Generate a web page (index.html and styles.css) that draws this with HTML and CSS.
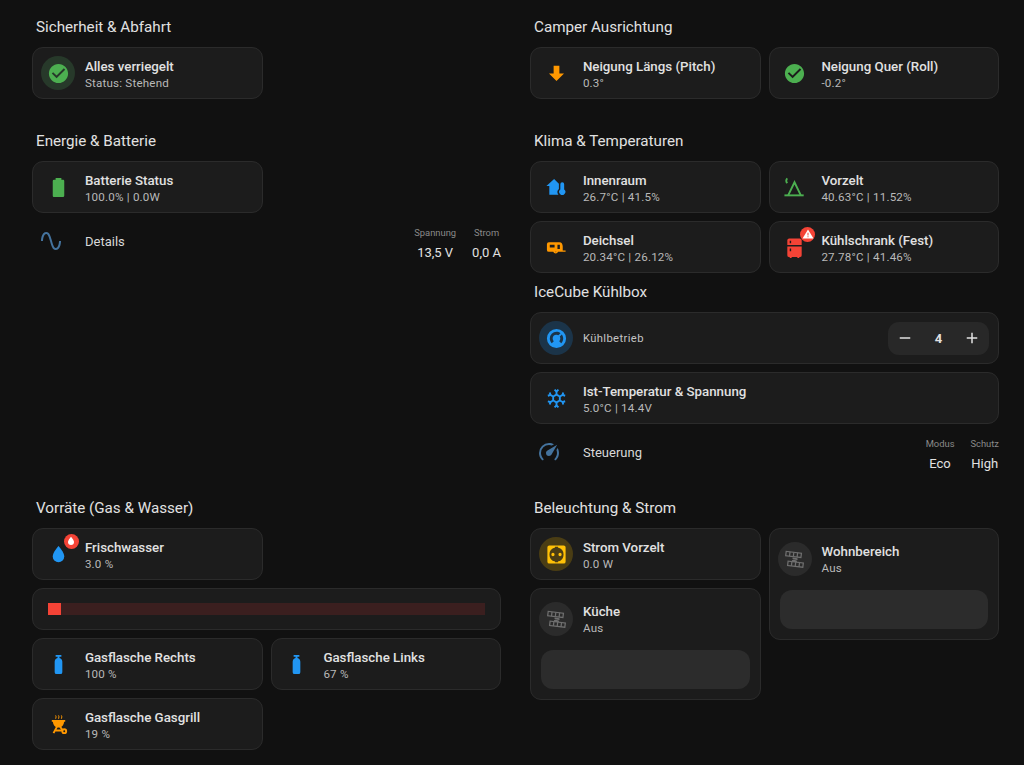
FILE: index.html
```html
<!DOCTYPE html>
<html lang="de">
<head>
<meta charset="utf-8">
<title>Camper Dashboard</title>
<link rel="stylesheet" href="styles.css">
</head>
<body>
<main class="page">
  <section class="sec">
    <h2>Sicherheit &amp; Abfahrt</h2>
    <div class="cards">
      <div class="tile"><span class="ico disc green"><svg viewBox="0 0 24 24"><path d="M12 2C6.5 2 2 6.5 2 12S6.5 22 12 22 22 17.5 22 12 17.5 2 12 2M10 17L5 12L6.41 10.59L10 14.17L17.59 6.58L19 8L10 17Z"/></svg></span><div class="txt"><b>Alles verriegelt</b><small>Status: Stehend</small></div></div>
    </div>
  </section>
  <section class="sec">
    <h2>Camper Ausrichtung</h2>
    <div class="cards">
      <div class="tile"><span class="ico orange"><svg viewBox="0 0 24 24"><path d="M9,4H15V12H19.84L12,19.84L4.16,12H9V4Z"/></svg></span><div class="txt"><b>Neigung Längs (Pitch)</b><small>0.3°</small></div></div>
      <div class="tile"><span class="ico green"><svg viewBox="0 0 24 24"><path d="M12 2C6.5 2 2 6.5 2 12S6.5 22 12 22 22 17.5 22 12 17.5 2 12 2M10 17L5 12L6.41 10.59L10 14.17L17.59 6.58L19 8L10 17Z"/></svg></span><div class="txt"><b>Neigung Quer (Roll)</b><small>-0.2°</small></div></div>
    </div>
  </section>

  <section class="sec">
    <h2>Energie &amp; Batterie</h2>
    <div class="cards">
      <div class="tile"><span class="ico green"><svg viewBox="0 0 24 24"><path d="M16.67,4H15V2H9V4H7.33A1.33,1.33 0 0,0 6,5.33V20.67C6,21.4 6.6,22 7.33,22H16.67A1.33,1.33 0 0,0 18,20.67V5.33C18,4.6 17.4,4 16.67,4Z"/></svg></span><div class="txt"><b>Batterie Status</b><small>100.0% | 0.0W</small></div></div>
      <div class="row wide">
        <span class="row-ico"><svg viewBox="0 0 24 24"><path d="M16.5,21C13.5,21 12.31,16.76 11.05,12.28C10.14,9.04 9,5 7.5,5C4.11,5 4,11.93 4,12H2C2,11.63 2.06,3 7.5,3C10.5,3 11.71,7.25 12.97,11.74C13.83,14.8 15,19 16.5,19C19.94,19 20.03,12.07 20.03,12H22.03C22.03,12.37 21.97,21 16.5,21Z"/></svg></span>
        <span class="row-name">Details</span>
        <div class="attr"><small>Spannung</small><span>13,5 V</span></div>
        <div class="attr"><small>Strom</small><span>0,0 A</span></div>
      </div>
    </div>
  </section>
  <section class="sec">
    <h2>Klima &amp; Temperaturen</h2>
    <div class="cards">
      <div class="tile"><span class="ico blue"><svg viewBox="0 0 24 24"><path d="M9.5 3L1.500 10.500H4.500V19.500H14A4 4 0 0 1 14.500 13.500V8L9.500 3Z"/><path d="M18 6.500A2 2 0 0 0 16 8.500V14A3.200 3.200 0 1 0 20 14V8.500A2 2 0 0 0 18 6.500Z"/></svg></span><div class="txt"><b>Innenraum</b><small>26.7°C | 41.5%</small></div></div>
      <div class="tile"><span class="ico green"><svg viewBox="0 0 24 24"><path class="st" d="M5.500 20L12 6.500L18.500 20"/><path class="st" d="M1.500 20.200H21.600"/><path class="st" d="M4.500 2.500C3 4 3 6 4.500 7.500"/></svg></span><div class="txt"><b>Vorzelt</b><small>40.63°C | 11.52%</small></div></div>
      <div class="tile"><span class="ico orange"><svg viewBox="0 0 24 24"><path fill-rule="evenodd" d="M4 6.500H15C17.500 6.500 18.500 8.500 18.500 11V15H21.500V16.500H13.600A2.600 2.600 0 0 1 8.600 16.500H4A2 2 0 0 1 2 14.500V8.500A2 2 0 0 1 4 6.500ZM5 9V12H10V9ZM13 9V13.500H15.500V9ZM10.500 16.500A.8 .8 0 0 0 12 16.500Z"/></svg></span><div class="txt"><b>Deichsel</b><small>20.34°C | 26.12%</small></div></div>
      <div class="tile"><span class="ico red"><svg viewBox="0 0 24 24"><path fill-rule="evenodd" d="M6.500 2.500H17.500A2 2 0 0 1 19.500 4.500V9.500H4.500V4.500A2 2 0 0 1 6.500 2.500ZM7 5V7.500H8.500V5ZM4.500 11H19.500V20A2 2 0 0 1 17.500 22H17V23H15V22H9V23H7V22H6.500A2 2 0 0 1 4.500 20ZM7 13V16H8.500V13Z"/></svg><span class="badge"><svg viewBox="0 0 24 24"><path class="w" d="M12 3L23 21H1ZM11 9.500V15H13V9.500ZM11 16.500V18.500H13V16.500Z" fill-rule="evenodd"/></svg></span></span><div class="txt"><b>Kühlschrank (Fest)</b><small>27.78°C | 41.46%</small></div></div>
    </div>
    <h2 class="sub-head">IceCube Kühlbox</h2>
    <div class="cards">
      <div class="tile wide"><span class="ico disc blue"><svg viewBox="0 0 24 24"><path d="M16.95,16.95L14.83,14.83C15.55,14.1 16,13.1 16,12C16,11.26 15.79,10.57 15.43,10L17.6,7.81C18.5,9.04 19,10.5 19,12C19,13.85 18.24,15.64 16.95,16.95M12,5C13.5,5 14.96,5.5 16.19,6.4L14,8.56C13.43,8.21 12.74,8 12,8A4,4 0 0,0 8,12C8,13.1 8.45,14.1 9.17,14.83L7.05,16.95C5.76,15.64 5,13.85 5,12A7,7 0 0,1 12,5M12,2A10,10 0 0,0 2,12A10,10 0 0,0 12,22A10,10 0 0,0 22,12A10,10 0 0,0 12,2Z"/></svg></span><div class="txt no-pad"><span class="plain">Kühlbetrieb</span></div>
        <div class="stepper"><span class="op"><svg viewBox="0 0 24 24"><path d="M19,13H5V11H19V13Z"/></svg></span><b>4</b><span class="op"><svg viewBox="0 0 24 24"><path d="M19,13H13V19H11V13H5V11H11V5H13V11H19V13Z"/></svg></span></div>
      </div>
      <div class="tile wide"><span class="ico blue"><svg viewBox="0 0 24 24"><path d="M20.79,13.95L18.46,14.57L16.46,13.44V10.56L18.46,9.43L20.79,10.05L21.31,8.12L19.54,7.65L20,5.88L18.07,5.36L17.45,7.69L15.45,8.82L13,7.38V5.12L14.71,3.41L13.29,2L12,3.29L10.71,2L9.29,3.41L11,5.12V7.38L8.5,8.82L6.5,7.69L5.92,5.36L4,5.88L4.47,7.65L2.7,8.12L3.22,10.05L5.55,9.43L7.55,10.56V13.45L5.55,14.58L3.22,13.96L2.7,15.89L4.47,16.36L4,18.12L5.93,18.64L6.55,16.31L8.55,15.18L11,16.62V18.88L9.29,20.59L10.71,22L12,20.71L13.29,22L14.7,20.59L13,18.88V16.62L15.5,15.17L17.5,16.3L18.12,18.63L20,18.12L19.53,16.35L21.3,15.88L20.79,13.95M9.5,10.56L12,9.11L14.5,10.56V13.44L12,14.89L9.5,13.44V10.56Z"/></svg></span><div class="txt"><b>Ist-Temperatur &amp; Spannung</b><small>5.0°C | 14.4V</small></div></div>
      <div class="row wide">
        <span class="row-ico"><svg viewBox="0 0 24 24"><path d="M12,16A3,3 0 0,1 9,13C9,11.88 9.61,10.9 10.5,10.39L20.21,4.77L14.68,14.35C14.18,15.33 13.17,16 12,16M12,3C13.81,3 15.5,3.5 16.97,4.32L14.87,5.53C14,5.19 13,5 12,5A8,8 0 0,0 4,13C4,15.21 4.89,17.21 6.34,18.65H6.35C6.74,19.04 6.74,19.67 6.35,20.06C5.96,20.45 5.32,20.45 4.93,20.07V20.07C3.12,18.26 2,15.76 2,13A10,10 0 0,1 12,3M22,13C22,15.76 20.88,18.26 19.07,20.07V20.07C18.68,20.45 18.05,20.45 17.66,20.06C17.27,19.67 17.27,19.04 17.66,18.65V18.65C19.11,17.2 20,15.21 20,13C20,12 19.81,11 19.46,10.1L20.68,8C21.5,9.5 22,11.18 22,13Z"/></svg></span>
        <span class="row-name">Steuerung</span>
        <div class="attr"><small>Modus</small><span>Eco</span></div>
        <div class="attr"><small>Schutz</small><span>High</span></div>
      </div>
    </div>
  </section>

  <section class="sec">
    <h2>Vorräte (Gas &amp; Wasser)</h2>
    <div class="cards">
      <div class="tile"><span class="ico blue"><svg viewBox="0 0 24 24"><path d="M12,20A6,6 0 0,1 6,14C6,10 12,3.25 12,3.25C12,3.25 18,10 18,14A6,6 0 0,1 12,20Z"/></svg><span class="badge"><svg viewBox="0 0 24 24"><path class="w" d="M12,20A6,6 0 0,1 6,14C6,10 12,3.25 12,3.25C12,3.25 18,10 18,14A6,6 0 0,1 12,20Z"/></svg></span></span><div class="txt"><b>Frischwasser</b><small>3.0 %</small></div></div>
      <div class="barcard wide"><div class="track"><div class="fill" style="width:3%"></div></div></div>
      <div class="tile"><span class="ico blue"><svg viewBox="0 0 24 24"><path d="M16,9V14L16,20A2,2 0 0,1 14,22H10A2,2 0 0,1 8,20V14L8,9C8,7.14 9.27,5.57 11,5.13V4H9V2H15V4H13V5.13C14.73,5.57 16,7.14 16,9Z"/></svg></span><div class="txt"><b>Gasflasche Rechts</b><small>100 %</small></div></div>
      <div class="tile"><span class="ico blue"><svg viewBox="0 0 24 24"><path d="M16,9V14L16,20A2,2 0 0,1 14,22H10A2,2 0 0,1 8,20V14L8,9C8,7.14 9.27,5.57 11,5.13V4H9V2H15V4H13V5.13C14.73,5.57 16,7.14 16,9Z"/></svg></span><div class="txt"><b>Gasflasche Links</b><small>67 %</small></div></div>
      <div class="tile"><span class="ico orange"><svg viewBox="0 0 24 24"><path d="M5 7.200H19V9H17.900C17.600 12 16 14.200 13.500 15H10.500C8 14.200 6.400 12 6.100 9H5Z"/><path class="st thin" d="M9 2.500L9.500 4L9 6M12 2.500L12.500 4L12 6M15 2.500L15.500 4L15 6"/><path class="st" d="M10.300 14.500L6.800 21M13.700 14.500L16.500 18M8.500 18.300H15.700"/><circle class="st" cx="18" cy="19" r="2"/></svg></span><div class="txt"><b>Gasflasche Gasgrill</b><small>19 %</small></div></div>
    </div>
  </section>
  <section class="sec">
    <h2>Beleuchtung &amp; Strom</h2>
    <div class="lights">
      <div class="stack">
        <div class="tile"><span class="ico disc yellow"><svg viewBox="0 0 24 24"><path fill-rule="evenodd" d="M4.500 2.500H19.500A2 2 0 0 1 21.500 4.500V19.500A2 2 0 0 1 19.500 21.500H4.500A2 2 0 0 1 2.500 19.500V4.500A2 2 0 0 1 4.500 2.500ZM10.500 4V4.600A7.600 7.600 0 0 0 10.500 19.400V20H13.500V19.400A7.600 7.600 0 0 0 13.500 4.600V4ZM8.300 10.300A1.700 1.700 0 1 1 8.300 13.700A1.700 1.700 0 1 1 8.300 10.300ZM15.700 10.300A1.700 1.700 0 1 1 15.700 13.700A1.700 1.700 0 1 1 15.700 10.300Z"/></svg></span><div class="txt"><b>Strom Vorzelt</b><small>0.0 W</small></div></div>
        <div class="light">
          <div class="light-head"><span class="ico disc grey"><svg viewBox="0 0 24 24"><g class="strip"><g transform="rotate(7 11 7)"><rect x="3" y="4.500" width="16" height="4.500"/><path d="M7 4.500V9M11 4.500V9M15 4.500V9"/></g><g transform="rotate(7 13 17)"><rect x="5" y="14.700" width="16" height="4.500"/><path d="M9 14.700V19.200M13 14.700V19.200M17 14.700V19.200"/></g><path class="z" d="M10 10.800L15 11.500L9.500 13.500L14.500 14"/></g></svg></span><div class="txt"><b>Küche</b><small>Aus</small></div></div>
          <div class="slider"></div>
        </div>
      </div>
      <div class="stack">
        <div class="light">
          <div class="light-head"><span class="ico disc grey"><svg viewBox="0 0 24 24"><g class="strip"><g transform="rotate(7 11 7)"><rect x="3" y="4.500" width="16" height="4.500"/><path d="M7 4.500V9M11 4.500V9M15 4.500V9"/></g><g transform="rotate(7 13 17)"><rect x="5" y="14.700" width="16" height="4.500"/><path d="M9 14.700V19.200M13 14.700V19.200M17 14.700V19.200"/></g><path class="z" d="M10 10.800L15 11.500L9.500 13.500L14.500 14"/></g></svg></span><div class="txt"><b>Wohnbereich</b><small>Aus</small></div></div>
          <div class="slider"></div>
        </div>
      </div>
    </div>
  </section>
</main>
</body>
</html>
```
FILE: styles.css
```css
* { box-sizing: border-box; }
html, body { margin: 0; height: 100%; }
body {
  background: #111111;
  color: #e1e1e1;
  font-family: Roboto, "Liberation Sans", sans-serif;
  overflow: hidden;
}
.page {
  display: grid;
  grid-template-columns: 469px 469px;
  grid-template-rows: 114px 367px auto;
  column-gap: 29px;
  padding: 15px 0 0 32px;
}
h2 {
  margin: 0 0 8px;
  padding-left: 4px;
  height: 24px;
  font-size: 15.2px;
  font-weight: 400;
  line-height: 24px;
  color: #e1e1e1;
}
.sub-head { margin-top: 7px; }
.cards {
  display: grid;
  grid-template-columns: repeat(2, 1fr);
  gap: 8px;
}
.wide { grid-column: 1 / -1; }
.tile, .barcard, .light {
  background: #1c1c1c;
  border: 1px solid #2b2b2b;
  border-radius: 11px;
}
.tile {
  height: 52px;
  display: flex;
  align-items: center;
  padding: 0 8px;
  gap: 9.9px;
}
.ico {
  position: relative;
  flex: none;
  width: 34px;
  height: 34px;
  border-radius: 50%;
  display: flex;
  align-items: center;
  justify-content: center;
}
.ico > svg { width: 23px; height: 23px; fill: currentColor; }
.st { fill: none; stroke: currentColor; stroke-width: 2; }
.st.thin { stroke-width: 1; }
.green { color: #4caf50; }
.orange { color: #ff9800; }
.blue { color: #2196f3; }
.red { color: #f44336; }
.yellow { color: #ffc107; }
.grey { color: #6f6f6f; }
.disc.green { background: #27392a; }
.disc.blue { background: #1b3449; }
.disc.yellow { background: #4a3d14; }
.disc.grey { background: #2b2b2b; }
.badge {
  position: absolute;
  top: -3.5px;
  right: -3.5px;
  width: 15px;
  height: 15px;
  border-radius: 50%;
  background: #f44336;
  display: flex;
  align-items: center;
  justify-content: center;
}
.badge svg { width: 12px; height: 12px; }
.badge .w { fill: #ffffff; }
.txt { display: flex; flex-direction: column; min-width: 0; flex: 1; padding-top: 3px; }
.txt.no-pad { padding-top: 0; }
.txt b {
  font-size: 13.3px;
  font-weight: 500;
  line-height: 17px;
  color: #e1e1e1;
  white-space: nowrap;
}
.txt small {
  font-size: 11.6px;
  line-height: 17px;
  letter-spacing: 0.2px;
  color: #b9b9b9;
  white-space: nowrap;
}
.plain { font-size: 11.2px; letter-spacing: 0.4px; color: #c4c4c4; }
.stepper {
  width: 101px;
  height: 33px;
  margin-right: 1px;
  border-radius: 11px;
  background: #282828;
  display: flex;
  align-items: center;
  justify-content: space-between;
  padding: 0 8px;
}
.stepper b { font-size: 13px; font-weight: 700; color: #e1e1e1; }
.op { display: flex; }
.op svg { width: 18px; height: 18px; fill: #e1e1e1; }
.row {
  height: 40px;
  display: flex;
  align-items: center;
  padding-left: 7px;
}
.row-ico { flex: none; width: 24px; height: 24px; margin-right: 22px; }
.row-ico svg { width: 24px; height: 24px; fill: #44739e; display: block; }
.row-name { flex: 1; font-size: 13px; color: #d8d8d8; }
.attr {
  display: flex;
  flex-direction: column;
  align-items: center;
  margin: 3px 0 0 16px;
}
.attr small { font-size: 9.4px; line-height: 20px; color: #8a8a8a; }
.attr span { font-size: 13px; line-height: 20px; color: #e1e1e1; }
.barcard {
  height: 42px;
  display: flex;
  align-items: center;
  padding: 0 15px;
}
.track { flex: 1; height: 12px; background: #3b1f1f; }
.fill { height: 100%; background: #f44336; }
.lights {
  display: grid;
  grid-template-columns: repeat(2, 1fr);
  gap: 8px;
  align-items: start;
}
.stack { display: flex; flex-direction: column; gap: 8px; }
.light { height: 112px; padding: 8px 10px 0; }
.light-head { display: flex; align-items: center; gap: 10px; height: 44px; margin: 0 -2px; }
.light-head .txt { padding-top: 1px; }
.slider { height: 39px; margin-top: 9px; border-radius: 12px; background: #2c2c2c; }
.strip rect, .strip path { fill: none; stroke: #6f6f6f; stroke-width: 1.3; }
.strip .z { stroke-width: 1.6; }
```
